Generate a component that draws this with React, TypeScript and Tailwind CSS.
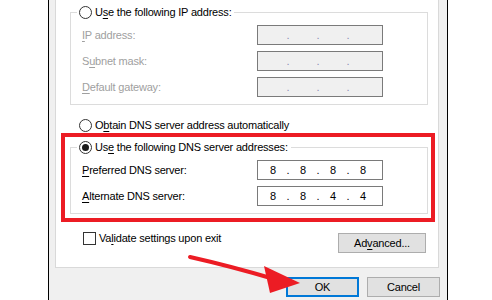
const U = ({ children }: { children: string }) => <span className="underline underline-offset-[2px]">{children}</span>;

const Radio = ({ checked = false }: { checked?: boolean }) => (
  <span className="w-[13px] h-[13px] rounded-full border border-[#333] bg-white flex items-center justify-center shrink-0">
    {checked && <span className="w-[7px] h-[7px] rounded-full bg-[#1a1a1a]" />}
  </span>
);

const AddressBox = ({ value, disabled = false }: { value: string[]; disabled?: boolean }) => (
  <div
    className={`w-[126px] h-[20px] border border-[#7a7a7a] flex items-center pl-[5px] ${
      disabled ? 'bg-[#f0f0f0] text-[#8c8cb4]' : 'bg-white text-black'
    }`}
  >
    {value.map((v, i) => (
      <div key={i} className="flex">
        <span className="w-[20px] text-center">{v}</span>
        {i < 3 && <span className="w-[10px] text-center">.</span>}
      </div>
    ))}
  </div>
);

const Row = ({ label, value, disabled = false }: { label: React.ReactNode; value: string[]; disabled?: boolean }) => (
  <div className="flex items-center h-[20px]">
    <span className={`w-[186px] pl-[11px] ${disabled ? 'text-[#a0a0a0]' : 'text-black'}`}>{label}</span>
    <AddressBox value={value} disabled={disabled} />
  </div>
);

const Group = ({ legend, checked, children }: { legend: React.ReactNode; checked?: boolean; children: React.ReactNode }) => (
  <fieldset className="ml-[14px] w-[358px] border border-[#dcdcdc] pb-[7px]">
    <legend className="ml-[6px] pl-[2px] pr-[3px] h-[16px] flex items-center gap-[3px]">
      <Radio checked={checked} />
      <span>{legend}</span>
    </legend>
    <div className="pt-[5px] flex flex-col gap-[6px]">{children}</div>
  </fieldset>
);

export default function App() {
  const empty = ['', '', '', ''];
  return (
    <div className="relative w-[492px] h-[300px] overflow-hidden bg-white flex font-['Liberation_Sans',Arial,sans-serif] text-[11px] tracking-[-0.2px] text-black leading-none">
      <div className="w-[48px] shrink-0" />
      <div className="w-[400px] shrink-0 border-x border-black bg-[#f0f0f0] flex flex-col">
        <div className="ml-[6px] w-[384px] h-[268px] bg-white border-x border-b border-[#d9d9d9] flex flex-col">
          <div className="mt-[4px]">
            <Group legend={<>U<U>s</U>e the following IP address:</>}>
              <Row disabled label={<><U>I</U>P address:</>} value={empty} />
              <Row disabled label={<>S<U>u</U>bnet mask:</>} value={empty} />
              <Row disabled label={<><U>D</U>efault gateway:</>} value={empty} />
            </Group>
          </div>

          <div className="mt-[12px] ml-[23px] h-[16px] flex items-center gap-[3px]">
            <Radio />
            <span>O<U>b</U>tain DNS server address automatically</span>
          </div>

          <div className="mt-[6px]">
            <Group checked legend={<>Us<U>e</U> the following DNS server addresses:</>}>
              <Row label={<><U>P</U>referred DNS server:</>} value={['8', '8', '8', '8']} />
              <Row label={<><U>A</U>lternate DNS server:</>} value={['8', '8', '4', '4']} />
            </Group>
          </div>

          <div className="mt-[18px] flex items-start">
            <label className="ml-[27px] flex items-center gap-[3px] h-[13px]">
              <span className="w-[13px] h-[13px] border border-[#333] bg-white shrink-0" />
              <span>Va<U>l</U>idate settings upon exit</span>
            </label>
            <button className="ml-auto mr-[12px] mt-[1px] w-[88px] h-[20px] bg-[#e1e1e1] border border-[#adadad] flex items-center justify-center">
              Ad<U>v</U>anced...
            </button>
          </div>
        </div>

        <div className="mt-[9px] pr-[7px] flex justify-end gap-[8px]">
          <button className="w-[73px] h-[20px] bg-[#e1e1e1] border-2 border-[#0078d7] flex items-center justify-center">OK</button>
          <button className="w-[73px] h-[20px] bg-[#e1e1e1] border border-[#adadad] flex items-center justify-center">Cancel</button>
        </div>
      </div>

      {/* annotation: red highlight box */}
      <div className="absolute left-[61px] top-[133px] w-[374px] h-[89px] border-4 border-[#ec1c24]" />

      {/* annotation: red arrow */}
      <svg className="absolute left-0 top-0" width="492" height="300" viewBox="0 0 492 300">
        <path d="M190 257 Q230 266 274 279" stroke="#ec1c24" strokeWidth="4" strokeLinecap="round" fill="none" />
        <polygon points="264,266 300,283 270,293" fill="#ec1c24" />
      </svg>
    </div>
  );
}
